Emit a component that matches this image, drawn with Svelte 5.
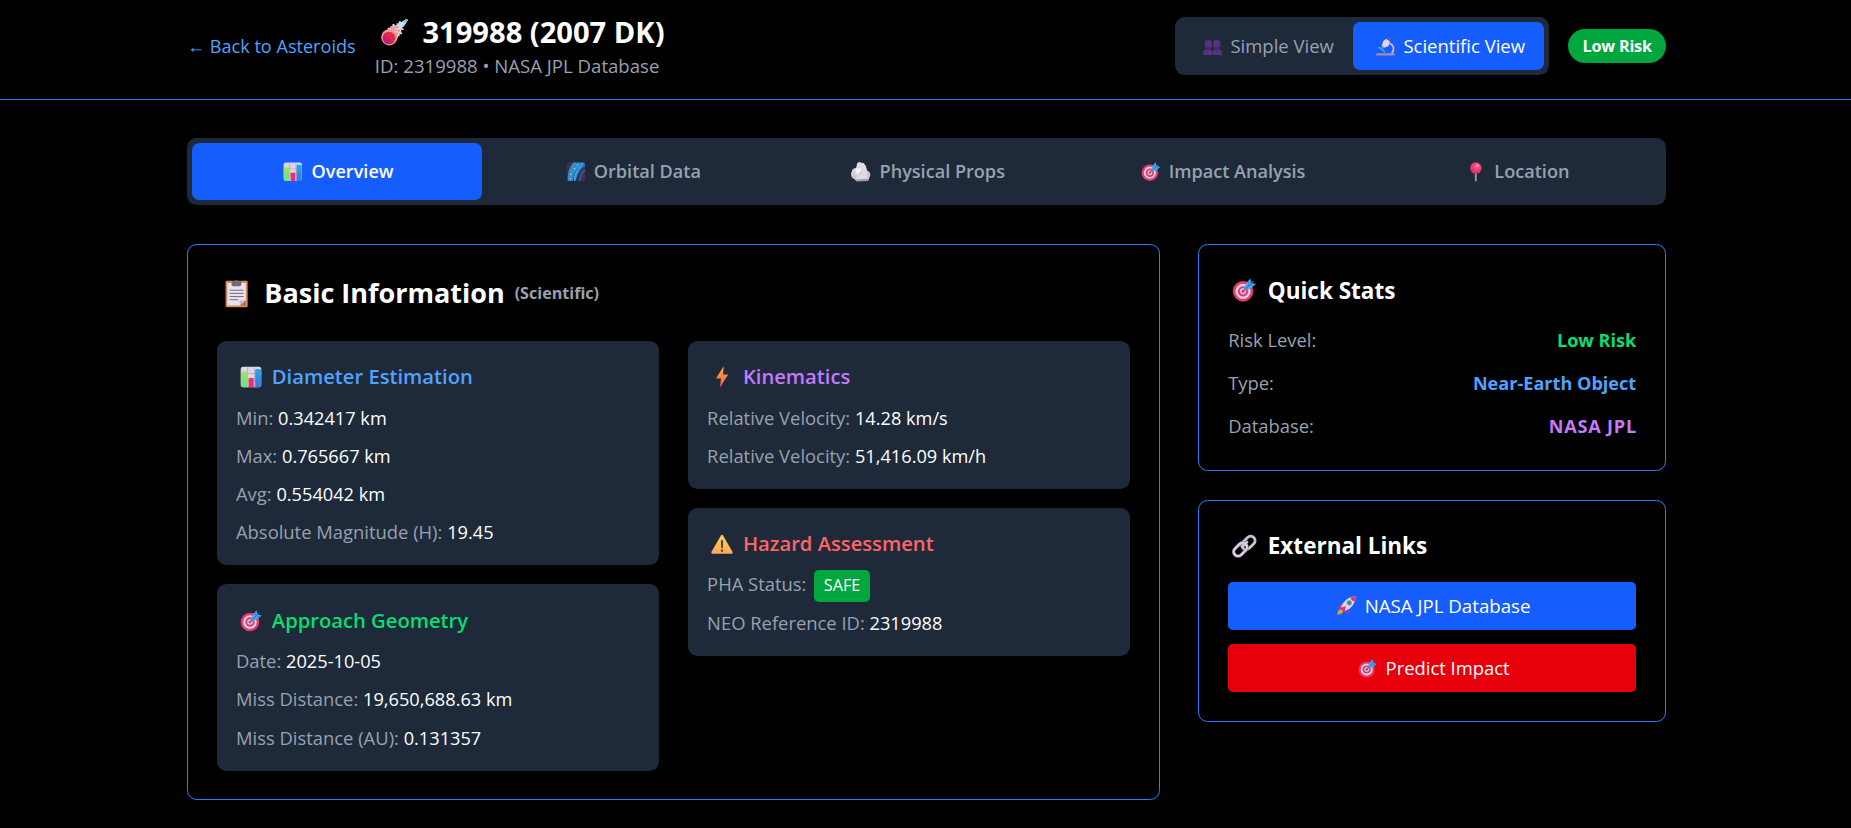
<script>
  const tabs = [
    { icon: 'chart', label: 'Overview' },
    { icon: 'galaxy', label: 'Orbital Data' },
    { icon: 'rock', label: 'Physical Props' },
    { icon: 'dart', label: 'Impact Analysis' },
    { icon: 'pin', label: 'Location' }
  ];
  let active = $state('Overview');
  let view = $state('scientific');

  const columns = [
    [
      {
        icon: 'chart', title: 'Diameter Estimation', tone: 'blue',
        rows: [['Min:', '0.342417 km'], ['Max:', '0.765667 km'], ['Avg:', '0.554042 km'], ['Absolute Magnitude (H):', '19.45']]
      },
      {
        icon: 'dart', title: 'Approach Geometry', tone: 'green',
        rows: [['Date:', '2025-10-05'], ['Miss Distance:', '19,650,688.63 km'], ['Miss Distance (AU):', '0.131357']]
      }
    ],
    [
      {
        icon: 'bolt', title: 'Kinematics', tone: 'purple',
        rows: [['Relative Velocity:', '14.28 km/s'], ['Relative Velocity:', '51,416.09 km/h']]
      },
      {
        icon: 'warning', title: 'Hazard Assessment', tone: 'red',
        rows: [['PHA Status:', 'SAFE', true], ['NEO Reference ID:', '2319988']]
      }
    ]
  ];

  const stats = [
    ['Risk Level:', 'Low Risk', 'green'],
    ['Type:', 'Near-Earth Object', 'blue'],
    ['Database:', 'NASA JPL', 'purple']
  ];
</script>

{#snippet icon(name)}
  <svg class="ico" viewBox="0 0 32 32" aria-hidden="true">
    {#if name === 'chart'}
      <rect x="1" y="1" width="30" height="30" rx="3.5" fill="#dcd5e4" />
      <path d="M1 11H31M1 21H31M11 1V31M21 1V31" stroke="#b9adc6" stroke-width="1.2" />
      <path d="M3 8.5h7.5V31H4.5A3 3 0 0 1 1.5 28V10Z" fill="url(#barGreen)" />
      <rect x="12.5" y="17.5" width="7.5" height="13.5" rx="1" fill="#ee2f6e" />
      <path d="M22 6q0-1.5 1.5-1.5h5.5q1.500 0 1.500 1.500V28a3 3 0 0 1-3 3H22Z" fill="url(#barBlue)" />
    {:else if name === 'galaxy'}
      <rect x="1" y="1" width="30" height="30" rx="2" fill="#3e3044" />
      <path d="M12 1H31V9C22 14 18 22 16 31H3C2 20 5 9 12 1Z" fill="#2e8fd0" />
      <path d="M31 2C20 8 14 18 12 31M31 7C24 12 19 20 17 31" stroke="#183a78" stroke-width="2" fill="none" />
      <path d="M29 3C20 9 15 18 13.500 29" stroke="#63c6f2" stroke-width="1.600" fill="none" />
      <path d="M19 31C21 21 25 13 31 9V31Z" fill="#432f5a" />
      <path d="M22 31C23 22 26 17 31 13" stroke="#2b6faa" stroke-width="2" fill="none" />
      <circle cx="8" cy="20" r="1.300" fill="#f7d45c" /><circle cx="14" cy="11" r="1.200" fill="#f7d45c" />
      <circle cx="7" cy="27" r="1" fill="#f7d45c" /><circle cx="19" cy="5" r="1" fill="#bfe9ff" />
    {:else if name === 'rock'}
      <path d="M10 2.500 13 .5 20.500 2 24 6.500 26 13.500 31 17 31.500 22 28 31 9 31.500 5.500 28 1 25 .5 18 3 12 9 9Z" fill="#c9c4cf" />
      <path d="M13 .5 20.500 2 24 6.500 26 14 19 20 16.500 11 9 9 10 2.500Z" fill="#dfdce3" />
      <path d="M3 12 9 9 16.500 11 17 15 10 22 1 23 .5 18Z" fill="#d5d0da" />
      <path d="M9 9.500 16.500 11 17 15 10 21 7 14Z" fill="#f5f3f7" />
      <path d="M10 22 19 18 26 14 27 27 8 30Z" fill="#dedae2" />
      <path d="M8 28.500 27 27.500 28 31 9 31.500Z" fill="#a69cae" />
    {:else if name === 'dart'}
      <circle cx="14.500" cy="17.500" r="13.500" fill="#e8386c" />
      <circle cx="14.500" cy="17.500" r="10" fill="#d9cfe2" />
      <circle cx="14.500" cy="17.500" r="6.800" fill="#e8386c" />
      <circle cx="14.500" cy="17.500" r="4" fill="#d9cfe2" />
      <circle cx="14.500" cy="17.500" r="2" fill="#b0487f" />
      <path d="M14.500 17.500 21 11" stroke="#7b5d8e" stroke-width="1.800" />
      <path d="M16.500 12.500 18.500 7 24 .5 25.500 6.500 31.500 8 25 13.500 19.500 15.500Z" fill="#42adf3" />
      <path d="M18.500 13.500 28 4" stroke="#1f72c8" stroke-width="1.500" />
      <path d="M21.500 7.500 23 3.500M24.500 10.500 28.500 9" stroke="#1f72c8" stroke-width="1" />
    {:else if name === 'pin'}
      <rect x="14.500" y="16" width="3" height="15.500" rx="1" fill="#a397ae" />
      <circle cx="16" cy="10" r="9.500" fill="url(#pinHead)" />
      <ellipse cx="18.500" cy="6" rx="2.300" ry="2" fill="#ff9fc2" />
    {:else if name === 'clipboard'}
      <rect x="4" y="2" width="24.500" height="29.500" rx="1.500" fill="#da8b52" />
      <path d="M6 4.500H26.500V24.500L20.500 29.500H6Z" fill="#e8e1ee" />
      <path d="M26.500 23.500V29.500H19.500Z" fill="#bf6f3c" />
      <path d="M19.500 24 26.500 23.500 20 29.500Z" fill="#c5b4d5" />
      <path d="M11 2.500H14Q16 -.5 18 2.500H21.500V6Q21.500 8 19.500 8H12.500Q10.500 8 10.500 6Z" fill="#75697c" />
      <path d="M8.500 12.500H24M8.500 16H24M8.500 19.500H24M8.500 23H18" stroke="#786b82" stroke-width="1.100" />
    {:else if name === 'bolt'}
      <path d="M18.500 .5 7 18H14.500L13 31.500 25 12.500H17.500Z" fill="url(#boltFill)" />
    {:else if name === 'warning'}
      <path d="M14.500 3.500Q16 1.500 17.500 3.500L31.500 27.500Q32 30 30 30H2Q0 30 .5 27.500Z" fill="url(#warnFill)" />
      <path d="M14.300 10.500H17.700L17.200 22H14.800Z" fill="#54403d" />
      <rect x="14.300" y="24" width="3.400" height="3.300" rx="1" fill="#54403d" />
    {:else if name === 'link'}
      <g fill="none" stroke-linecap="round">
        <rect x="11.500" y="6" width="20" height="11.500" rx="5.750" transform="rotate(-45 21.500 11.750)" stroke="#cbbfd2" stroke-width="3.800" />
        <rect x="1" y="14.500" width="20" height="11.500" rx="5.750" transform="rotate(-45 11 20.250)" stroke="#7d6d88" stroke-width="4.400" />
        <rect x="1" y="14.500" width="20" height="11.500" rx="5.750" transform="rotate(-45 11 20.250)" stroke="#d8cede" stroke-width="3.200" />
        <path d="M15.300 15.200 20 10.500" stroke="#d8cede" stroke-width="3.200" />
      </g>
    {:else if name === 'rocket'}
      <path d="M9 12 3.500 17 2.500 21.500 9 19.500Z" fill="#e32f63" />
      <path d="M20 23 16 30.500 20.500 28 21.500 20Z" fill="#e32f63" />
      <path d="M7 22Q1 22 .5 31Q9 31 10.500 25Z" fill="#f39b22" />
      <path d="M7 19C10 9 19 1 31 1C31 13 23 22 13 25Z" fill="#dcd4e3" />
      <path d="M22 2.800 31 1 29.200 10Q24 8 22 2.800Z" fill="#ee2e57" />
      <circle cx="20.500" cy="11.500" r="3.800" fill="#3d85bd" stroke="#8c93b4" stroke-width="1.200" />
      <path d="M5.500 20 15 16.500 12.500 27Z" fill="#e53367" />
    {:else if name === 'comet'}
      <path d="M3 18 8 12V10.500H11V8.500H13.500V6H16V7.500H18.500V5H21V3H23.500V4.500L29 .5H31.500V2.500L28.500 6.500H27.500V9H25.500V11.500H27V13H24V16H25V18H22V20.500H20.500L18 26Z" fill="#e3cdd4" />
      <path d="M21.500 5V3H23.500V4.500L29 .5H31.500L28 7.500 24 10.500 21 8Z" fill="#bce5ee" />
      <path d="M27.500 4.500 31.500 .5" stroke="#4fc9dd" stroke-width="1.800" />
      <circle cx="9.800" cy="21.700" r="9.600" fill="#f6938f" />
      <circle cx="9.500" cy="22.500" r="7.500" fill="url(#cometCore)" />
      <path d="M14 12h2M18 10h2M20 14h2M17 13.500h1.500M12 11h1.500M18.500 17h1.500M15 9.500h1.300" stroke="#e2578c" stroke-width="1.600" />
    {:else if name === 'people'}
      <g fill="#563283">
        <rect x="3" y="5" width="12" height="14.500" rx="5" />
        <rect x="17" y="5" width="12" height="14.500" rx="5" />
        <path d="M.5 30V26Q.5 20.500 6 20.500H10Q15.700 20.500 15.700 26V30Z" />
        <path d="M16.300 30V26Q16.300 20.500 22 20.500H26Q31.500 20.500 31.500 26V30Z" />
      </g>
      <path d="M4 16.500Q8.500 20.500 13.500 16.500M18.500 16.500Q23 20.500 28 16.500" stroke="#3c2167" stroke-width="1.500" fill="none" />
      <path d="M7 19.500H11V22H7ZM21 19.500H25V22H21Z" fill="#472774" />
    {:else if name === 'microscope'}
      <rect x=".5" y="27" width="31" height="3.800" rx="1.300" fill="#a88fa6" />
      <path d="M22.500 10.500C29.500 13 31.500 21 26.500 27" stroke="#c4b7cb" stroke-width="3" fill="none" />
      <path d="M4 16.500 15 25" stroke="#34a5f4" stroke-width="3" />
      <path d="M12 7 17 3 23.500 7.500 20.500 15.500 14 18 9.500 14Z" fill="#ddd5df" />
      <path d="M17.500 3 21 .5 24.500 3.500 23 7Z" fill="#725f6f" />
      <path d="M10 14 14.500 17.500 12 19.500 9 17.500Z" fill="#9a8ba0" />
    {/if}
  </svg>
{/snippet}

<svg class="defs" width="0" height="0" aria-hidden="true">
  <defs>
    <linearGradient id="barGreen" x1="0" y1="0" x2="0" y2="1"><stop offset="0" stop-color="#a6e05b" /><stop offset="1" stop-color="#66e48c" /></linearGradient>
    <linearGradient id="barBlue" x1="0" y1="0" x2="0" y2="1"><stop offset="0" stop-color="#2fa6ee" /><stop offset="1" stop-color="#3a78d0" /></linearGradient>
    <linearGradient id="boltFill" x1="0" y1="0" x2="0" y2="1"><stop offset="0" stop-color="#fbb545" /><stop offset="1" stop-color="#f2504a" /></linearGradient>
    <linearGradient id="warnFill" x1="0" y1="0" x2="0" y2="1"><stop offset="0" stop-color="#fbd45a" /><stop offset="1" stop-color="#ffa75c" /></linearGradient>
    <radialGradient id="pinHead" cx=".6" cy=".35" r=".65"><stop offset="0" stop-color="#ff5b92" /><stop offset="1" stop-color="#d92c5c" /></radialGradient>
    <linearGradient id="cometCore" x1="1" y1="0" x2="0" y2="1"><stop offset="0" stop-color="#f23a3a" /><stop offset="1" stop-color="#b3107d" /></linearGradient>
  </defs>
</svg>

<div class="page">
  <header>
    <div class="wrap bar">
      <div class="ident">
        <a class="back" href="#list">← Back to Asteroids</a>
        <div>
          <h1>{@render icon('comet')}<span>319988 (2007 DK)</span></h1>
          <p class="sub">ID: 2319988 • NASA JPL Database</p>
        </div>
      </div>
      <div class="controls">
        <div class="toggle">
          <button class:on={view === 'simple'} onclick={() => (view = 'simple')}>{@render icon('people')}<span>Simple View</span></button>
          <button class:on={view === 'scientific'} onclick={() => (view = 'scientific')}>{@render icon('microscope')}<span>Scientific View</span></button>
        </div>
        <span class="risk">Low Risk</span>
      </div>
    </div>
  </header>

  <main class="wrap">
    <nav>
      {#each tabs as tab}
        <button class:on={active === tab.label} onclick={() => (active = tab.label)}>{@render icon(tab.icon)}<span>{tab.label}</span></button>
      {/each}
    </nav>

    <div class="layout">
      <section class="card">
        <h2>{@render icon('clipboard')}<span>Basic Information</span><small>(Scientific)</small></h2>
        <div class="columns">
          {#each columns as column}
            <div class="column">
              {#each column as panel}
                <div class="panel">
                  <h4 class={panel.tone}>{@render icon(panel.icon)}<span>{panel.title}</span></h4>
                  <div class="rows">
                    {#each panel.rows as [label, value, pill]}
                      <p><span class="label">{label}</span> <span class={pill ? 'pill' : 'value'}>{value}</span></p>
                    {/each}
                  </div>
                </div>
              {/each}
            </div>
          {/each}
        </div>
      </section>

      <aside>
        <section class="card">
          <h3>{@render icon('dart')}<span>Quick Stats</span></h3>
          <div class="stats">
            {#each stats as [label, value, tone]}
              <div class="stat"><span class="label">{label}</span><strong class={tone}>{value}</strong></div>
            {/each}
          </div>
        </section>
        <section class="card">
          <h3>{@render icon('link')}<span>External Links</span></h3>
          <div class="links">
            <a class="jpl" href="#jpl">{@render icon('rocket')}<span>NASA JPL Database</span></a>
            <a class="impact" href="#impact">{@render icon('dart')}<span>Predict Impact</span></a>
          </div>
        </section>
      </aside>
    </div>
  </main>
</div>

<style>
  :global(body) { background: #000; overflow: hidden; }
  .defs { display: block; }
  .page {
    box-sizing: border-box;
    min-height: 828px;
    padding-left: 2px;
    background: #000;
    color: #fff;
    font-family: "Open Sans", "Noto Sans", sans-serif;
    font-size: 18.4px;
    line-height: 28.8px;
  }
  h1, h2, h3, h4, p { margin: 0; }
  a { text-decoration: none; }
  button { border: 0; font: inherit; color: inherit; background: none; padding: 0; cursor: pointer; }
  .wrap { width: 1479px; margin: 0 auto; }
  .ico { flex: none; display: block; overflow: visible; }

  header { border-bottom: 1px solid #2b7fff; padding: 13.2px 0 18.2px; margin-left: -2px; padding-left: 2px; }
  .bar, .ident, .controls { display: flex; align-items: center; }
  .bar { justify-content: space-between; }
  .ident { gap: 19.2px; }
  .back { color: #51a2ff; font-size: 18.1px; }
  h1 { display: flex; align-items: center; font-size: 29.1px; font-weight: 700; line-height: 38.4px; }
  h1 .ico { width: 27px; height: 27px; margin: 0 14.6px 0 6px; }
  .sub { color: #99a1af; font-size: 18.6px; }
  .controls { gap: 19.2px; margin-top: -2px; }
  .toggle { display: flex; background: #1e2939; border-radius: 9.6px; padding: 4.8px; }
  .toggle button {
    display: flex; align-items: center; height: 48px; padding: 1px 19.2px 0 22.500px;
    border-radius: 7.2px; color: #99a1af; font-size: 18.500px;
  }
  .toggle .ico, .links .ico { width: 19.2px; height: 19.2px; margin-right: 8.600px; }
  .toggle .on { background: #155dfc; color: #fff; }
  .risk {
    background: #00a63e; border-radius: 999px; padding: 5.2px 14.2px 4.4px;
    font-size: 16.200px; font-weight: 700; letter-spacing: -0.2px; line-height: 24px;
  }

  nav {
    display: grid; grid-template-columns: repeat(5, 1fr); gap: 4.8px;
    background: #1e2939; border-radius: 9.6px; padding: 4.8px; margin: 38.4px 0 39.2px;
  }
  nav button {
    display: flex; align-items: center; justify-content: center; height: 57.2px;
    padding: 1px 0 0 3.300px; border-radius: 7.2px; color: #99a1af; font-size: 18.100px; font-weight: 580;
  }
  nav .ico { width: 19.6px; height: 19.6px; margin-right: 8.600px; }
  nav .on { background: #155dfc; color: #fff; }

  .layout { display: grid; grid-template-columns: 973px 1fr; gap: 38.4px; align-items: start; }
  .card { border: 1px solid #2b7fff; border-radius: 9.6px; padding: 28.8px; }
  section.card:first-child h2 { margin-top: 0; }
  h2 { display: flex; align-items: center; font-size: 27px; font-weight: 700; line-height: 38.4px; margin-bottom: 28.8px; }
  h2 .ico { width: 28.8px; height: 28.8px; margin: 0 13.200px 0 5.500px; }
  small { font-size: 16.100px; font-weight: 660; color: #99a1af; margin-left: 10px; }
  .columns { display: grid; grid-template-columns: 1fr 1fr; gap: 28.8px; }
  .column { display: flex; flex-direction: column; gap: 19px; }
  .panel { background: #1e2939; border-radius: 9.6px; padding: 19.4px 19.2px 18.400px; }
  h4 { display: flex; align-items: center; font-size: 20.200px; font-weight: 580; line-height: 33.6px; margin-bottom: 9.6px; }
  h4 .ico { width: 22px; height: 22px; margin: 0 10px 0 3.800px; }
  .rows { display: flex; flex-direction: column; gap: 9.6px; }
  .rows p { height: 28.7px; white-space: nowrap; }
  .label { color: #99a1af; }
  .value { font-size: 18.200px; }
  .pill {
    display: inline-block; background: #00a63e; border-radius: 4.8px; padding: 4.8px 9.6px;
    margin: -4.8px 0 -4.8px 3px; font-size: 16.200px; line-height: 22.400px;
  }

  aside { display: flex; flex-direction: column; gap: 28.8px; }
  h3 { display: flex; align-items: center; font-size: 22.500px; font-weight: 680; line-height: 33.6px; margin-bottom: 19px; }
  h3 .ico { width: 24.400px; height: 24.400px; margin: 0 11.200px 0 4px; }
  .stats { display: flex; flex-direction: column; gap: 14.2px; }
  .stat { display: flex; justify-content: space-between; }
  .stat strong { font-weight: 680; font-size: 18.100px; }
  .stat .purple { letter-spacing: 0.8px; margin-right: -0.8px; }
  .links { display: flex; flex-direction: column; gap: 14.4px; }
  .links a {
    display: flex; align-items: center; justify-content: center; height: 48px;
    padding-left: 3px; border-radius: 4.8px; color: #fff;
  }
  .jpl { background: #155dfc; }
  .jpl span { font-size: 18.7px; }
  .impact { background: #e7000b; }

  .blue { color: #51a2ff; }
  .green { color: #05df72; }
  .purple { color: #c27aff; }
  .red { color: #ff6467; }
</style>
